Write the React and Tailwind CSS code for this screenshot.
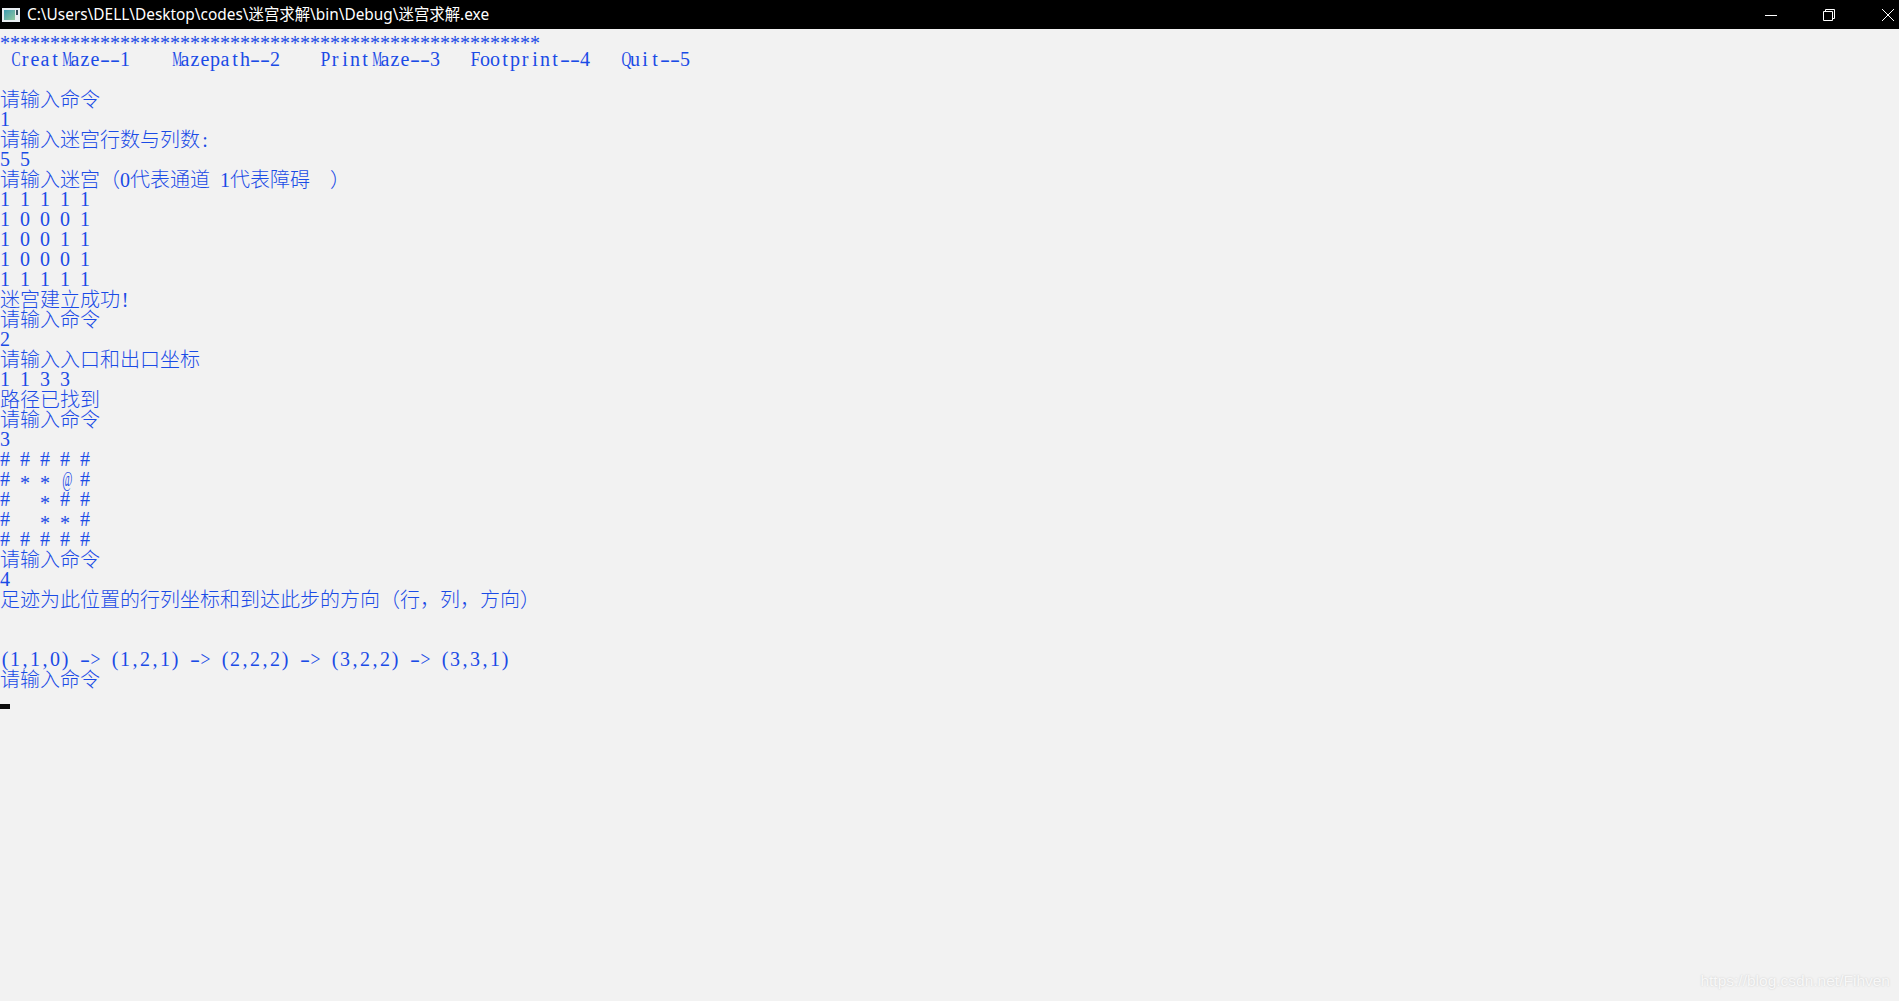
const lines = [
  "*".repeat(54),
  " CreatMaze--1    Mazepath--2    PrintMaze--3   Footprint--4   Quit--5",
  "",
  "请输入命令",
  "1",
  "请输入迷宫行数与列数:",
  "5 5",
  "请输入迷宫（0代表通道 1代表障碍  ）",
  "1 1 1 1 1",
  "1 0 0 0 1",
  "1 0 0 1 1",
  "1 0 0 0 1",
  "1 1 1 1 1",
  "迷宫建立成功!",
  "请输入命令",
  "2",
  "请输入入口和出口坐标",
  "1 1 3 3",
  "路径已找到",
  "请输入命令",
  "3",
  "# # # # #",
  "# * * @ #",
  "#   * # #",
  "#   * * #",
  "# # # # #",
  "请输入命令",
  "4",
  "足迹为此位置的行列坐标和到达此步的方向（行，列，方向）",
  "",
  "",
  "(1,1,0) -> (1,2,1) -> (2,2,2) -> (3,2,2) -> (3,3,1)",
  "请输入命令",
];

const cjk = /[\u3000-\u9fff\uff00-\uffef]/;

// squeeze the wide serif glyphs so each one fits its 10px console cell
function cellClass(ch) {
  if (ch === "M" || ch === "@") return "scale-x-[0.55]";
  if (ch === "C" || ch === "Q" || ch === "m") return "scale-x-[0.68]";
  if (ch === "P" || ch === "F" || ch === ">") return "scale-x-[0.88]";
  if (ch === "-") return "scale-x-[1.5]";
  if (ch === "*") return "translate-y-[4px]";
  return "";
}

function ConsoleLine({ text }) {
  const runs = text.match(/[\u3000-\u9fff\uff00-\uffef]+|[^\u3000-\u9fff\uff00-\uffef]+/g) || [];
  return (
    <div className="h-5 leading-5 whitespace-pre text-[20px]">
      {runs.map((run, i) =>
        cjk.test(run) ? (
          <span key={i} className="font-['Noto_Sans_CJK_SC',sans-serif] font-light">{run}</span>
        ) : (
          <span key={i}>
            {[...run].map((ch, j) => (
              <span key={j} className={`inline-block w-[10px] text-center ${cellClass(ch)}`}>{ch}</span>
            ))}
          </span>
        )
      )}
    </div>
  );
}

function AppIcon() {
  return (
    <svg width="18" height="14" viewBox="0 0 18 14" className="ml-[2px] shrink-0">
      <defs>
        <linearGradient id="screen" x1="0" y1="0" x2="1" y2="1">
          <stop offset="0" stopColor="#3f9bb0" />
          <stop offset="1" stopColor="#8fc8a0" />
        </linearGradient>
      </defs>
      <rect x="0" y="0" width="18" height="14" fill="#e8eef2" />
      <rect x="2" y="2" width="11" height="10" fill="url(#screen)" />
      <rect x="14" y="2" width="2" height="5" fill="#2f4a58" />
    </svg>
  );
}

export default function App() {
  return (
    <div className="relative h-[1001px] w-[1899px] overflow-hidden bg-[#f2f2f2]">
      <div className="flex h-[29px] items-center bg-black">
        <AppIcon />
        <span className="ml-[7px] font-['Noto_Sans','Noto_Sans_CJK_SC',sans-serif] text-[15.4px] text-white whitespace-nowrap">
          {"C:\\Users\\DELL\\Desktop\\codes\\迷宫求解\\bin\\Debug\\迷宫求解.exe"}
        </span>
        <div className="ml-auto flex items-center">
          <svg width="12" height="12" viewBox="0 0 12 12" className="mr-[46px]">
            <path d="M0 6.5H12" stroke="#fff" strokeWidth="1" />
          </svg>
          <svg width="12" height="12" viewBox="0 0 12 12" className="mr-[47px]">
            <path d="M.5 2.5h9v9h-9zM2.5 2.5v-2h9v9h-2" fill="none" stroke="#fff" strokeWidth="1" />
          </svg>
          <svg width="12" height="12" viewBox="0 0 12 12" className="mr-[5px]">
            <path d="M0 0L12 12M12 0L0 12" stroke="#fff" strokeWidth="1" />
          </svg>
        </div>
      </div>

      <div className="font-['Liberation_Serif',serif] text-[#1a4be6]">
        {lines.map((text, i) => (
          <ConsoleLine key={i} text={text} />
        ))}
        <div className="flex h-5 items-end">
          <div className="h-[5px] w-[10px] bg-[#0c0c0c]" />
        </div>
      </div>

      <div className="absolute right-[9px] bottom-[9px] font-['Liberation_Sans',sans-serif] text-[15.5px] text-[#f8f8f8] [text-shadow:0_0_2px_#c8c8c8]">
        https://blog.csdn.net/Fihven
      </div>
    </div>
  );
}
